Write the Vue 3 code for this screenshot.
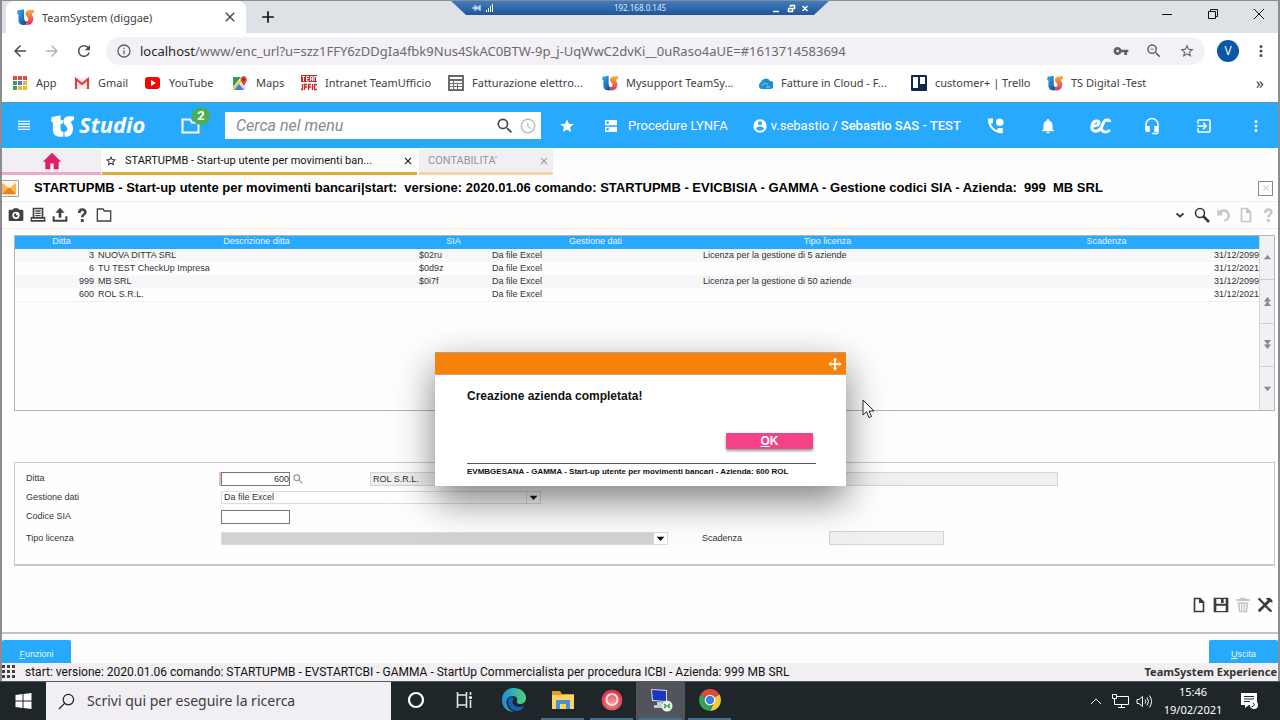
<script setup>
const p = {
  back: 'M20 11H7.83l5.59-5.59L12 4l-8 8 8 8 1.41-1.41L7.83 13H20z',
  forward: 'M12 4l-1.41 1.41L16.17 11H4v2h12.17l-5.58 5.59L12 20l8-8z',
  reload: 'M17.65 6.35A7.96 7.96 0 0 0 12 4a8 8 0 1 0 7.73 10h-2.08A6 6 0 1 1 12 6c1.66 0 3.14.69 4.22 1.78L13 11h7V4z',
  info: 'M11 17h2v-6h-2zm1-15a10 10 0 1 0 0 20 10 10 0 0 0 0-20zm0 18a8 8 0 1 1 0-16 8 8 0 0 1 0 16zM11 9h2V7h-2z',
  close: 'M19 6.41L17.59 5 12 10.59 6.41 5 5 6.41 10.59 12 5 17.59 6.41 19 12 13.41 17.59 19 19 17.59 13.41 12z',
  plus: 'M19 13h-6v6h-2v-6H5v-2h6V5h2v6h6z',
  key: 'M12.65 10A5.99 5.99 0 0 0 7 6a6 6 0 1 0 5.65 8H17v4h4v-4h2v-4zM7 14a2 2 0 1 1 0-4 2 2 0 0 1 0 4z',
  zoomOut: 'M15.5 14h-.79l-.28-.27A6.5 6.5 0 1 0 13.73 14.43l.27.28v.79l5 4.99L20.49 19zm-6 0a4.5 4.5 0 1 1 0-9 4.5 4.5 0 0 1 0 9zM7 9h5v1H7z',
  search: 'M15.5 14h-.79l-.28-.27A6.5 6.5 0 1 0 13.73 14.43l.27.28v.79l5 4.99L20.49 19zm-6 0a4.5 4.5 0 1 1 0-9 4.5 4.5 0 0 1 0 9z',
  starLine: 'M22 9.24l-7.19-.62L12 2 9.19 8.63 2 9.24l5.46 4.73L5.82 21 12 17.27 18.18 21l-1.63-7.03zM12 15.4l-3.76 2.27 1-4.28-3.32-2.88 4.38-.38L12 6.1l1.71 4.04 4.38.38-3.32 2.88 1 4.28z',
  star: 'M12 17.27L18.18 21l-1.64-7.03L22 9.24l-7.19-.61L12 2 9.19 8.63 2 9.24l5.46 4.73L5.82 21z',
  dots: 'M12 8a2 2 0 1 0 0-4 2 2 0 0 0 0 4zm0 2a2 2 0 1 0 0 4 2 2 0 0 0 0-4zm0 6a2 2 0 1 0 0 4 2 2 0 0 0 0-4z',
  menu: 'M3 18h18v-2H3zm0-4h18v-2H3zm0-4h18V8H3zm0-6v2h18V4z',
  clock: 'M12 2a10 10 0 1 0 0 20 10 10 0 0 0 0-20zm0 18a8 8 0 1 1 0-16 8 8 0 0 1 0 16zm.5-13H11v6l5.25 3.15.75-1.23-4.5-2.67z',
  dns: 'M20 13H4a1 1 0 0 0-1 1v6c0 .55.45 1 1 1h16a1 1 0 0 0 1-1v-6a1 1 0 0 0-1-1zM7 19a2 2 0 1 1 0-4 2 2 0 0 1 0 4zM20 3H4a1 1 0 0 0-1 1v6c0 .55.45 1 1 1h16a1 1 0 0 0 1-1V4a1 1 0 0 0-1-1zM7 9a2 2 0 1 1 0-4 2 2 0 0 1 0 4z',
  account: 'M12 2a10 10 0 1 0 0 20 10 10 0 0 0 0-20zm0 3a3 3 0 1 1 0 6 3 3 0 0 1 0-6zm0 14.2a7.2 7.2 0 0 1-6-3.22c.03-1.99 4-3.08 6-3.08s5.97 1.09 6 3.08a7.2 7.2 0 0 1-6 3.22z',
  phone: 'M1 2h7v6l-3 1c1.5 4 4.5 7 8 8.5l2-3h6v7C10 22.5 1 14 1 2zM17 2a5 5 0 1 0 0 10 5 5 0 0 0 0-10z',
  bell: 'M12 22a2 2 0 0 0 2-2h-4c0 1.1.9 2 2 2zm6-6v-5c0-3.07-1.64-5.64-4.5-6.32V4a1.5 1.5 0 0 0-3 0v.68C7.63 5.36 6 7.92 6 11v5l-2 2v1h16v-1z',
  headset: 'M12 1a9 9 0 0 0-9 9v7a3 3 0 0 0 3 3h3v-8H5v-2a7 7 0 0 1 14 0v2h-4v8h4v1h-7v2h6a3 3 0 0 0 3-3V10a9 9 0 0 0-9-9z',
  exit: 'M10.09 15.59L11.5 17l5-5-5-5-1.41 1.41L12.67 11H3v2h9.67zM19 3H5a2 2 0 0 0-2 2v4h2V5h14v14H5v-4H3v4c0 1.1.9 2 2 2h14a2 2 0 0 0 2-2V5a2 2 0 0 0-2-2z',
  home: 'M10 22v-7h4v7h6v-9h3L12 2 1 13h3v9z',
  camera: 'M9 2L7.2 4H3a2 2 0 0 0-2 2v13c0 1.1.9 2 2 2h18a2 2 0 0 0 2-2V6a2 2 0 0 0-2-2h-4.2L15 2zm3 5a5.500 5.500 0 1 1 0 11 5.500 5.500 0 0 1 0-11zM9 12.500a3 3 0 1 0 6 0h-3v-3a3 3 0 0 0-3 3z',
  printer: 'M4 1h16v14h3v7H1v-7h3zm2.500 2.500V15h11V3.500zM8 5h8v2H8zm0 3.500h8v2H8zM8 12h8v2H8zM3 17.500v2h18v-2z',
  upload: 'M12 1l7 7.5h-5V16h-4V8.5H5zM1 14h3v5h16v-5h3v8H1z',
  folderSquare: 'M1 2h10l2 3h10v17H1zm2 2v16h18V7h-9l-2-3z',
  help: 'M6 9c0-4 2-7 6.500-7S19 5 19 8c0 4-4.500 4-4.500 7.500h-4C10.500 11 15 10.500 15 8c0-1.500-1-2.500-2.500-2.500S10 7 10 9zM10.300 18h4.200v4.500h-4.200z',
  undo: 'M2 3l2.5 3C10 1 20 3 21 12c.4 5-3 9-8 10l-1-3c4-1 6-4 5-7.5-1-4-6-5-9-2.5l3 3-9 1z',
  doc: 'M4 1h10l6 6v16H4zm2.500 2.500v17h11V9H12V3.500z',
  save: 'M1 1h22v22H1zM5 3v7h14V3h-3v6h-4V3zM5 13v8h14v-8z',
  trash: 'M8 1h8v2h6v3H2V3h6zM4 8h16l-2 15H6zm3 2l1 11h1V10zm4 0v11h2V10zm4 0v11h1l1-11z',
  tools: 'M1 3l3-2 7.5 8L16 5l-3-3 6-1 4 4v4l-3-2-5.5 5.5L23 21l-3 2-8-8-8 8-3-3 8.500-8.500z'
}

const bookmarks = [
  { text: 'App', icon: 'apps' },
  { text: 'Gmail', icon: 'gmail' },
  { text: 'YouTube', icon: 'youtube' },
  { text: 'Maps', icon: 'maps' },
  { text: 'Intranet TeamUfficio', icon: 'team' },
  { text: 'Fatturazione elettro...', icon: 'sheet' },
  { text: 'Mysupport TeamSy...', icon: 'ts' },
  { text: 'Fatture in Cloud - F...', icon: 'cloud' },
  { text: 'customer+ | Trello', icon: 'trello' },
  { text: 'TS Digital -Test', icon: 'ts' }
]
const appColors = ['#e04a3f', '#e04a3f', '#e04a3f', '#3c9d5b', '#3f7fd0', '#f0b43c', '#3c9d5b', '#f0b43c', '#f0b43c']

const columns = ['Ditta', 'Descrizione ditta', 'SIA', 'Gestione dati', 'Tipo licenza', 'Scadenza']
const rows = [
  ['3', 'NUOVA DITTA SRL', '$02ru', 'Da file Excel', 'Licenza per la gestione di 5 aziende', '31/12/2099'],
  ['6', 'TU TEST CheckUp Impresa', '$0d9z', 'Da file Excel', '', '31/12/2021'],
  ['999', 'MB SRL', '$0i7f', 'Da file Excel', 'Licenza per la gestione di 50 aziende', '31/12/2099'],
  ['600', 'ROL S.R.L.', '', 'Da file Excel', '', '31/12/2021']
]
const scrollers = [
  { label: 'Riga precedente', d: 'M5 2l4 5H1z' },
  { label: 'Pagina precedente', d: 'M5 0l4 5H6v1l3 4H1l3-4V5H1z' },
  { label: 'Pagina successiva', d: 'M5 10L1 5h3V4L1 0h8L6 4v1h3z' },
  { label: 'Riga successiva', d: 'M5 8L1 3h8z' }
]
const headerTools = [
  { label: 'Chiamate', d: p.phone },
  { label: 'Notifiche', d: p.bell },
  { label: 'Euroconference', d: '' },
  { label: 'Assistenza', d: p.headset },
  { label: 'Esci', d: p.exit },
  { label: 'Altro', d: p.dots }
]
const leftTools = [
  { label: 'Cattura', d: p.camera },
  { label: 'Stampa', d: p.printer },
  { label: 'Esporta', d: p.upload },
  { label: 'Aiuto', d: p.help },
  { label: 'Cartella', d: p.folderSquare }
]
const actionTools = [
  { label: 'Nuovo', d: p.doc },
  { label: 'Salva', d: p.save },
  { label: 'Elimina', d: p.trash, off: true },
  { label: 'Strumenti', d: p.tools }
]
</script>

<template>
  <div class="desktop">
    <svg class="defs" aria-hidden="true">
      <defs>
        <linearGradient id="tsBlue" x1="0" y1="0" x2="1" y2="1">
          <stop offset="0" stop-color="#2fb7ee" /><stop offset="1" stop-color="#1d3f93" />
        </linearGradient>
        <linearGradient id="tsWarm" x1="0" y1="0" x2="0" y2="1">
          <stop offset="0" stop-color="#f9b233" /><stop offset="1" stop-color="#e32c66" />
        </linearGradient>
        <linearGradient id="edge" x1="0" y1="0" x2="1" y2="0">
          <stop offset="0" stop-color="#1b8fdc" /><stop offset="1" stop-color="#50d37c" />
        </linearGradient>
        <radialGradient id="redBall" cx=".5" cy=".6" r=".6">
          <stop offset="0" stop-color="#f9a3a8" /><stop offset="1" stop-color="#d3283a" />
        </radialGradient>
        <symbol id="tsLogo" viewBox="0 0 24 22">
          <path fill="url(#tsBlue)" d="M1 1c3 1 5-1 9-1v12c0 3 1 5 3 5v5C5 23 2 20 2 14V7L0 6z" />
          <path fill="url(#tsWarm)" d="M24 1C16 0 12 2 12 6c0 4 4 5 4 8 0 2-1 3-3 3v5c7 1 10-4 10-9 0-3-2-5-2-6s1-2 3-2z" />
        </symbol>
      </defs>
    </svg>

    <div class="session">
      <header class="tabstrip">
        <div class="browser-tab">
          <svg class="fav"><use href="#tsLogo" /></svg>
          <span>TeamSystem (diggae)</span>
          <button class="bare tab-x" aria-label="Chiudi scheda"><svg viewBox="0 0 24 24"><path :d="p.close" /></svg></button>
        </div>
        <button class="bare new-tab" aria-label="Nuova scheda"><svg viewBox="0 0 24 24"><path :d="p.plus" /></svg></button>
        <div class="window-buttons">
          <button class="bare" aria-label="Riduci"><svg viewBox="0 0 10 10"><path d="M0 5.500h10" /></svg></button>
          <button class="bare" aria-label="Ripristina"><svg viewBox="0 0 10 10"><path d="M.5 2.500h7v7h-7zM2.500 2.500v-2h7v7h-2" /></svg></button>
          <button class="bare" aria-label="Chiudi"><svg viewBox="0 0 10 10"><path d="M0 0l10 10M10 0L0 10" /></svg></button>
        </div>
        <div class="rdp">
          <svg class="rdp-left" viewBox="0 0 24 8">
            <path d="M1 4h3M4 1v6M5 3h3v2H5zM9 1v6" stroke="#fff" fill="none" />
            <path d="M15 8V6h1v2zM17 8V4h1v4zM19 8V2h1v6zM21 8V0h1v8z" fill="#fff" />
          </svg>
          <span>192.168.0.145</span>
          <svg class="rdp-right" viewBox="0 0 36 9">
            <path d="M0 7.500h6M15.500 4.500h4v3h-4zM17.500 3v-1.500h4v3h-1M29.500 2l5 5M34.500 2l-5 5" stroke="#fff" stroke-width="1.500" fill="none" />
          </svg>
        </div>
      </header>

      <div class="addressbar">
        <button class="bare nav" aria-label="Indietro"><svg viewBox="0 0 24 24"><path :d="p.back" /></svg></button>
        <button class="bare nav dim" aria-label="Avanti"><svg viewBox="0 0 24 24"><path :d="p.forward" /></svg></button>
        <button class="bare nav" aria-label="Ricarica"><svg viewBox="0 0 24 24"><path :d="p.reload" /></svg></button>
        <div class="omnibox">
          <svg class="i16" viewBox="0 0 24 24"><path :d="p.info" /></svg>
          <span class="url"><b>localhost</b>/www/enc_url?u=szz1FFY6zDDgIa4fbk9Nus4SkAC0BTW-9p_j-UqWwC2dvKi__0uRaso4aUE=#1613714583694</span>
          <button class="bare" aria-label="Password"><svg class="i16" viewBox="0 0 24 24"><path :d="p.key" /></svg></button>
          <button class="bare" aria-label="Zoom"><svg class="i18" viewBox="0 0 24 24"><path :d="p.zoomOut" /></svg></button>
          <button class="bare" aria-label="Preferiti"><svg class="i16" viewBox="0 0 24 24"><path :d="p.starLine" /></svg></button>
        </div>
        <button class="bare avatar" aria-label="Profilo">V</button>
        <button class="bare kebab" aria-label="Menu"><svg class="i18" viewBox="0 0 24 24"><path :d="p.dots" /></svg></button>
      </div>

      <nav class="bookmarks">
        <a v-for="b in bookmarks" :key="b.text" href="#">
          <svg v-if="b.icon === 'apps'" viewBox="0 0 16 16">
            <rect v-for="(c, i) in appColors" :key="i" :x="1 + (i % 3) * 5" :y="1 + Math.floor(i / 3) * 5" width="4" height="4" :fill="c" />
          </svg>
          <svg v-else-if="b.icon === 'gmail'" viewBox="0 0 16 16">
            <path fill="#f3ecec" d="M1 3h14v11H1z" /><path fill="none" stroke="#d8453b" stroke-width="2.200" d="M2 14V4l6 5 6-5v10" />
          </svg>
          <svg v-else-if="b.icon === 'youtube'" viewBox="0 0 16 16">
            <rect y="2" width="15" height="12" rx="3" fill="#f00707" /><path fill="#fff" d="M6 5l5 3-5 3z" />
          </svg>
          <svg v-else-if="b.icon === 'maps'" viewBox="0 0 16 16">
            <path fill="#2f9e5a" d="M1 2h8L1 12z" /><path fill="#f2c94c" d="M1 12l8-8 2 2-10 9z" />
            <path fill="#d8dde2" d="M7 9l4-1 3 6-3 1z" /><path fill="#3f7fd8" d="M2 15l5-6 5 6z" />
            <path fill="#e0443b" d="M11.500 1a3.500 3.500 0 0 1 3 5L12 11l-3-5a3.500 3.500 0 0 1 2.500-5z" /><circle cx="11.700" cy="4.500" r="1.200" fill="#8c1f1a" />
          </svg>
          <svg v-else-if="b.icon === 'team'" viewBox="0 0 16 16">
            <path fill="#d3222a" d="M0 0h16v7H0z" />
            <path stroke="#fff" fill="none" d="M1 1.500h3M2.500 1.500V6M8 1.500H5.500V6H8M5.500 3.500H8M9.500 6V1.500h2V6M9.500 4h2M13 6V1.500h2.500V6" />
            <path stroke="#d3222a" stroke-width="1.300" fill="none" d="M1.500 9v5.500H0M3.500 15V9.500H6M3.500 12H6M7.500 15V9.500H10M7.500 12H10M11.500 9v6M16 9.500h-2.500v5H16" />
          </svg>
          <svg v-else-if="b.icon === 'sheet'" viewBox="0 0 16 16">
            <path fill="#6b6b6b" d="M0 0h16v16H0z" /><path fill="#fff" d="M2 2h12v2H2zM2 6h3v2H2zM6 6h8v2H6zM2 9h3v2H2zM6 9h3v2H6zM10 9h4v2h-4zM2 12h3v2H2zM6 12h3v2H6zM10 12h4v2h-4z" />
          </svg>
          <svg v-else-if="b.icon === 'cloud'" viewBox="0 0 16 16">
            <path fill="#1990d4" d="M4 14a4 4 0 0 1 0-7 5 5 0 0 1 9-1 4 4 0 0 1 0 8z" /><path fill="none" stroke="#8fd3f6" d="M5 11c1-3 4-4 6-1M9 12h4" />
          </svg>
          <svg v-else-if="b.icon === 'trello'" viewBox="0 0 16 16">
            <rect width="16" height="16" rx="1" fill="#0b2a4c" /><path fill="#fff" d="M2 2h5v11H2zM9 2h5v7H9z" />
          </svg>
          <svg v-else><use href="#tsLogo" /></svg>
          {{ b.text }}
        </a>
        <button class="bare more" aria-label="Altri preferiti">»</button>
      </nav>

      <header class="appbar">
        <button class="bare" aria-label="Menu principale"><svg class="i16" viewBox="0 0 24 24"><path :d="p.menu" /></svg></button>
        <div class="brand">
          <svg viewBox="0 0 24 22">
            <path d="M1 1c3 1 5-1 9-1v5h3l-1 4h-2v4c0 3 1 4 3 4v5C5 23 2 20 2 14V7L0 6z" />
            <path d="M24 1C16 0 13 2 13 6c0 4 4 5 4 8 0 2-1 3-3 3v5c7 1 9-4 9-9 0-3-2-5-2-6s1-2 3-2z" />
          </svg>
          <span>Studio</span>
        </div>
        <button class="bare windows" aria-label="Finestre aperte">
          <svg class="i20" viewBox="0 0 20 20"><path d="M2.500 3.500H10l2 3h6.500v10h-16z" fill="none" stroke="#fff" stroke-width="2" /></svg>
          <span class="badge">2</span>
        </button>
        <div class="menu-search">
          <input type="text" placeholder="Cerca nel menu" aria-label="Cerca nel menu" />
          <button class="bare" aria-label="Cerca"><svg class="i20 dark" viewBox="0 0 24 24"><path :d="p.search" /></svg></button>
          <button class="bare" aria-label="Cronologia"><svg class="i18 pale" viewBox="0 0 24 24"><path :d="p.clock" /></svg></button>
        </div>
        <button class="bare fav-star" aria-label="Preferiti"><svg class="i16" viewBox="0 0 24 24"><path :d="p.star" /></svg></button>
        <a class="proc" href="#"><svg class="i16" viewBox="0 0 24 24"><path :d="p.dns" /></svg>Procedure LYNFA</a>
        <a class="user" href="#"><svg class="i16" viewBox="0 0 24 24"><path :d="p.account" /></svg><span>v.sebastio <b>/ Sebastio SAS - TEST</b></span></a>
        <div class="head-tools">
          <button v-for="t in headerTools" :key="t.label" class="bare" :aria-label="t.label">
            <svg v-if="t.d" class="i18" viewBox="0 0 24 24"><path :d="t.d" /></svg>
            <svg v-else class="ec" viewBox="0 0 22 16"><path d="M3 8c4 0 7-1 7-3.500S4 2 3 8s5 7 9 2c2-3 2-8 6-8 2 0 3 1 3 2M12 9c0 6 6 6 9 3" /></svg>
          </button>
        </div>
      </header>

      <nav class="app-tabs">
        <a href="#" class="tab-home" aria-label="Home"><svg viewBox="0 0 24 24"><path :d="p.home" /></svg></a>
        <div class="tab active">
          <svg class="i12" viewBox="0 0 24 24"><path :d="p.starLine" /></svg>
          <a href="#">STARTUPMB - Start-up utente per movimenti ban...</a>
          <button class="bare" aria-label="Chiudi STARTUPMB"><svg class="i12" viewBox="0 0 24 24"><path :d="p.close" /></svg></button>
        </div>
        <div class="tab idle">
          <a href="#">CONTABILITA'</a>
          <button class="bare" aria-label="Chiudi CONTABILITA'"><svg class="i12" viewBox="0 0 24 24"><path :d="p.close" /></svg></button>
        </div>
      </nav>

      <div class="titlebar">
        <svg class="env" viewBox="0 0 18 18">
          <path fill="#fff" stroke="#999" d="M0 .5h17.500v17H0" /><path fill="#f9b84a" d="M0 3h15v12H0z" /><path fill="#fff3dc" d="M0 3h15L7.500 9z" /><path fill="#e8821b" d="M0 15l7.500-7 7.500 7z" />
        </svg>
        <h1>STARTUPMB - Start-up utente per movimenti bancari|start:&nbsp; versione: 2020.01.06 comando: STARTUPMB - EVICBISIA - GAMMA - Gestione codici SIA - Azienda:&nbsp; 999&nbsp; MB SRL</h1>
        <button class="bare panel-x" aria-label="Chiudi pannello"><svg viewBox="0 0 24 24"><path :d="p.close" /></svg></button>
      </div>

      <div class="toolbar">
        <button v-for="t in leftTools" :key="t.label" class="bare" :aria-label="t.label"><svg class="i16" viewBox="0 0 24 24"><path :d="t.d" fill-rule="evenodd" /></svg></button>
        <div class="toolbar-right">
          <button class="bare" aria-label="Espandi"><svg class="i16" viewBox="0 0 16 16"><path d="M4.500 6.500L8 9.500l3.500-3" fill="none" stroke="#3c3c40" stroke-width="2" /></svg></button>
          <button class="bare" aria-label="Trova"><svg class="i16" viewBox="0 0 16 16"><circle cx="6" cy="6" r="4.500" fill="none" stroke="#3c3c40" stroke-width="1.600" /><path d="M9 9l6 6" stroke="#3c3c40" stroke-width="2.600" /></svg></button>
          <button class="bare off" aria-label="Annulla"><svg class="i16" viewBox="0 0 24 24"><path :d="p.undo" /></svg></button>
          <button class="bare off" aria-label="Documento"><svg class="i16" viewBox="0 0 24 24"><path :d="p.doc" fill-rule="evenodd" /></svg></button>
          <button class="bare off" aria-label="Guida"><svg class="i16" viewBox="0 0 24 24"><path :d="p.help" /></svg></button>
        </div>
      </div>

      <main class="work">
        <div class="list">
          <div class="list-body">
            <table>
              <colgroup><col class="c1" /><col class="c2" /><col class="c3" /><col class="c4" /><col class="c5" /><col /></colgroup>
              <thead><tr><th v-for="c in columns" :key="c" scope="col">{{ c }}</th></tr></thead>
              <tbody><tr v-for="r in rows" :key="r[0]"><td v-for="(v, i) in r" :key="i">{{ v }}</td></tr></tbody>
            </table>
          </div>
          <div class="scroller">
            <button v-for="s in scrollers" :key="s.label" class="bare" :aria-label="s.label"><svg viewBox="0 0 10 10"><path :d="s.d" /></svg></button>
          </div>
        </div>

        <form class="details" @submit.prevent>
          <div class="row">
            <label for="ditta">Ditta</label>
            <input id="ditta" class="short num required" type="text" value="600" />
            <button type="button" class="bare lookup" aria-label="Cerca ditta"><svg viewBox="0 0 16 16"><circle cx="6" cy="6" r="4.500" /><path d="M9 9l6 6" /></svg></button>
            <input class="name" type="text" value="ROL S.R.L." readonly aria-label="Ragione sociale" />
          </div>
          <div class="row">
            <label for="gestione">Gestione dati</label>
            <span class="pick w-medium">
              <select id="gestione"><option>Da file Excel</option></select>
              <svg viewBox="0 0 15 12"><path d="M3 4h9l-4.500 5z" /></svg>
            </span>
          </div>
          <div class="row">
            <label for="sia">Codice SIA</label>
            <input id="sia" class="short" type="text" />
          </div>
          <div class="row last">
            <label for="licenza">Tipo licenza</label>
            <span class="pick grey w-long">
              <select id="licenza"><option></option></select>
              <svg viewBox="0 0 15 12"><path d="M3 4h9l-4.500 5z" /></svg>
            </span>
            <label class="mid" for="scadenza">Scadenza</label>
            <input id="scadenza" class="date" type="text" readonly />
          </div>
        </form>

        <div class="actions">
          <button v-for="t in actionTools" :key="t.label" class="bare" :class="{ off: t.off }" :aria-label="t.label"><svg class="i16" viewBox="0 0 24 24"><path :d="t.d" fill-rule="evenodd" /></svg></button>
        </div>
      </main>

      <div class="commands">
        <button><u>F</u>unzioni</button>
        <button><u>U</u>scita</button>
      </div>

      <footer class="status">
        <svg viewBox="0 0 14 14"><path d="M0 0h3v3H0zM5 0h3v3H5zM10 0h3v3h-3zM0 5h3v3H0zM5 5h3v3H5zM10 5h3v3h-3zM0 10h3v3H0zM5 10h3v3H5zM10 10h3v3h-3z" /></svg>
        <span>start: versione: 2020.01.06 comando: STARTUPMB - EVSTARTCBI - GAMMA - StartUp Commercialista per procedura ICBI - Azienda: 999 MB SRL</span>
        <strong>TeamSystem Experience</strong>
      </footer>
    </div>

    <section class="dialog" role="dialog" aria-labelledby="msg">
      <div class="dialog-head">
        <svg viewBox="0 0 16 16"><path d="M8 1v14M1 8h14" stroke-width="2" /><path d="M5.500 4L8 1.300 10.500 4M5.500 12L8 14.700 10.500 12M4 5.500L1.300 8 4 10.500M12 5.500L14.700 8 12 10.500" /></svg>
      </div>
      <div class="dialog-body">
        <p id="msg">Creazione azienda completata!</p>
        <button><u>O</u>K</button>
        <footer>EVMBGESANA - GAMMA - Start-up utente per movimenti bancari - Azienda: 600 ROL</footer>
      </div>
    </section>

    <svg class="pointer" viewBox="0 0 13 20"><path d="M1 1v15l3.500-3.300L7 18.500l2.500-1L7 12h5z" fill="#fff" stroke="#222" /></svg>

    <footer class="taskbar">
      <button class="bare start" aria-label="Start"><svg viewBox="0 0 16 16"><path d="M0 2l7-1v6.500H0zM8 1l8-1v7.500H8zM0 8.500h7V15l-7-1zM8 8.500h8V16l-8-1z" /></svg></button>
      <label class="os-search">
        <svg viewBox="0 0 18 18"><circle cx="11" cy="7" r="5.500" /><path d="M7 11l-6 6" /></svg>
        <input type="text" placeholder="Scrivi qui per eseguire la ricerca" aria-label="Scrivi qui per eseguire la ricerca" />
      </label>
      <button class="bare task" aria-label="Cortana"><svg viewBox="0 0 24 24"><circle cx="12" cy="12" r="7" fill="none" stroke="#fff" stroke-width="2.200" /></svg></button>
      <button class="bare task" aria-label="Visualizzazione attività"><svg viewBox="0 0 24 24"><path d="M4.500 4v3h9V4M4.500 20v-3h9v3M4.500 7v10M13.500 7v10M17.500 4v3M17.500 12v8" fill="none" stroke="#e4e4e4" stroke-width="1.600" /><circle cx="17.500" cy="9.500" r="1.600" fill="#fff" /></svg></button>
      <button class="bare task" aria-label="Edge"><svg viewBox="0 0 24 24"><path fill="url(#edge)" d="M0 12C0 4 6 0 12 0s12 4 12 10c0 4-3 6-6 6-2 0-4-1-3-3 1-3-1-5-4-5-5 0-8 4-6 9 1 4 4 6 7 7C5 24 0 19 0 12z" /><path fill="#1161b5" d="M9 9c-5 2-4 13 6 14 3 0 6-2 7-5-4 2-9 1-11-2-1-3 0-5 1-6z" /></svg></button>
      <button class="bare task run" aria-label="Esplora file"><svg viewBox="0 0 24 24"><path fill="#e0a020" d="M1 3h8l2 3h12v6H1z" /><path fill="#fcd462" d="M1 7h22v14H1z" /><path fill="#4a92cf" d="M5 12h14v9h-4v-5H9v5H5z" /></svg></button>
      <button class="bare task run" aria-label="Registratore"><svg viewBox="0 0 24 24"><circle cx="12" cy="12" r="10.500" fill="url(#redBall)" /><circle cx="12" cy="11.500" r="5.500" fill="none" stroke="#ffe0e0" stroke-width="2" /></svg></button>
      <button class="bare task run on" aria-label="Desktop remoto"><svg viewBox="0 0 24 24"><path fill="#d6dbe4" d="M2 1l16 1v12L3 13z" /><path fill="#1b35c4" d="M3 2l14 1v10L4 12z" /><path fill="#c5cad2" d="M8 14h5v3h3v3H5v-3h3z" /><circle cx="18" cy="18" r="5.500" fill="#e9f2e6" /><path d="M15 16l2 2-2 2M21 16l-2 2 2 2" fill="none" stroke="#2c9b3b" stroke-width="1.500" /></svg></button>
      <button class="bare task run" aria-label="Chrome"><svg viewBox="0 0 24 24"><path fill="#e0483c" d="M12 12L2.500 6.500a11 11 0 0 1 19 0z" /><path fill="#f7ca3e" d="M12 12l9.500-5.500A11 11 0 0 1 12 23l3-6z" /><path fill="#35a057" d="M12 12l2.500 5.500L12 23A11 11 0 0 1 2.500 6.500z" /><circle cx="12" cy="12" r="5.300" fill="#fff" /><circle cx="12" cy="12" r="4.200" fill="#3f7ee8" /></svg></button>
      <div class="tray">
        <button class="bare" aria-label="Icone nascoste"><svg class="caret" viewBox="0 0 12 8"><path d="M1 7l5-5 5 5" /></svg></button>
        <button class="bare" aria-label="Rete"><svg viewBox="0 0 17 15"><path d="M4.500 2.500h12v8H4.500M9.500 10.500v3M6 13.500h7M.5.500h4v4h-4zM2.500 4.500v6h3" /></svg></button>
        <button class="bare" aria-label="Volume"><svg viewBox="0 0 17 15"><path d="M1 5.500h2l3.500-3v10l-3.500-3H1zM9 5.500q1.500 2 0 4M11 3.500q3 4 0 8M13.500 1.500q4 6 0 12" /></svg></button>
        <div class="clock"><time>15:46</time><span>19/02/2021</span></div>
        <button class="bare" aria-label="Notifiche"><svg class="note" viewBox="0 0 18 18"><path class="solid" d="M1 1h16v12H9l-4 3v-3H1z" /><path class="lines" d="M4 4.500h10M4 7h10M4 9.500h6" /><circle class="solid" cx="14" cy="13" r="4" /><path class="lines" d="M13 10.500q3 3-1.500 4.500" /></svg></button>
      </div>
    </footer>
  </div>
</template>

<style>
html, body { background: #fff; }
</style>

<style scoped>
* { box-sizing: border-box; }
.desktop { position: relative; min-height: 100vh; display: flex; flex-direction: column; background: #fefefe; color: #111; font-family: "Liberation Sans", Arial, sans-serif; overflow: hidden; }
.defs { position: absolute; width: 0; height: 0; }
a { color: inherit; text-decoration: none; }
svg { display: block; flex: none; fill: currentColor; }
input, select, button { font: inherit; color: inherit; border-radius: 0; margin: 0; }
.bare { border: 0; padding: 0; background: none; display: flex; align-items: center; justify-content: center; flex: none; }
.i12 { width: 12px; height: 12px; }
.i16 { width: 16px; height: 16px; }
.i18 { width: 18px; height: 18px; }
.i20 { width: 20px; height: 20px; }
.session { flex: 1; display: flex; flex-direction: column; border: solid #8c8c92; border-width: 1px 2px 0; }

.tabstrip { position: relative; display: flex; align-items: stretch; height: 32px; background: #dee1e6; font-family: "Noto Sans", "Open Sans", sans-serif; }
.browser-tab { display: flex; align-items: center; width: 240px; margin-left: 4px; padding: 0 8px 0 11px; background: #fff; border-radius: 8px 8px 0 0; font-size: 11px; color: #3f4246; }
.fav { width: 17px; height: 16px; margin-right: 8px; }
.tab-x { margin-left: auto; }
.tab-x svg { width: 16px; height: 16px; }
.new-tab { width: 40px; margin-left: 2px; }
.new-tab svg { width: 20px; height: 20px; }
.window-buttons { display: flex; gap: 8px; margin-left: auto; }
.window-buttons button { width: 38px; padding-bottom: 7px; }
.window-buttons svg { width: 10px; height: 10px; fill: none; stroke: #111; }
.rdp { position: absolute; top: 0; left: 0; right: 0; width: 378px; height: 14px; margin: 0 auto; padding: 0 40px 0 20px; display: flex; align-items: center; justify-content: space-between; background: linear-gradient(#3f7cbd, #20559a); clip-path: polygon(0 0, 100% 0, 96% 100%, 4% 100%); color: #dfeaf6; font-size: 8px; line-height: 12px; }
.rdp-left { width: 24px; height: 8px; }
.rdp-right { width: 36px; height: 9px; margin-right: -20px; }
.rdp span { padding-left: 12px; }

.addressbar { display: flex; align-items: center; height: 36px; padding: 0 8px 0 2px; color: #4a4b50; background: #fff; }
.nav { width: 32px; }
.nav svg { width: 18px; height: 18px; }
.dim { color: #b4b4b8; }
.omnibox { flex: 1; display: flex; align-items: center; gap: 16px; height: 28px; margin-left: 6px; padding: 0 10px; border-radius: 14px; background: #f3f1f5; color: #5f6066; }
.omnibox .url { flex: 1; min-width: 0; margin-left: -8px; white-space: nowrap; font: 13px/20px "Noto Sans", "Open Sans", sans-serif; color: #6a6a70; }
.url b { font-weight: 400; color: #26262a; }
.avatar { width: 22px; height: 22px; margin-left: 12px; border-radius: 50%; background: #0b57a4; color: #fff; font: 12px/22px "Open Sans", sans-serif; }
.kebab { margin-left: 13px; }

.bookmarks { display: grid; grid-template-columns: 62px 71px 87px 69px 147px 154px 155px 154px 136px 1fr auto; align-items: center; height: 33px; padding: 0 14px 5px 10px; background: #fff; font: 11px/16px "Noto Sans", "Open Sans", sans-serif; color: #404045; }
.bookmarks a { display: flex; align-items: center; gap: 8px; white-space: nowrap; }
.bookmarks svg { width: 16px; height: 16px; }
.more { font-size: 16px; }

.appbar { display: flex; align-items: center; height: 46px; padding: 0 10px 0 14px; border-top: 1px solid #5393bd; background: #27a9fd; color: #fff; font-family: Roboto, sans-serif; }
.brand { display: flex; align-items: center; gap: 5px; margin-left: 19px; font: italic 700 22px/28px "Open Sans", "Noto Sans", sans-serif; }
.brand svg { width: 23px; height: 22px; }
.brand span { width: 68px; margin-top: -4px; }
.windows { position: relative; margin-left: 33px; }
.badge { position: absolute; left: 12px; top: -9px; width: 18px; height: 18px; border-radius: 50%; background: #4caf50; font: 700 13px/18px Roboto, sans-serif; text-align: center; }
.menu-search { display: flex; align-items: center; gap: 4px; width: 316px; height: 27px; margin-left: 25px; padding: 0 4px 0 11px; background: #fff; }
.menu-search input { flex: 1; min-width: 0; border: 0; padding: 0; outline: 0; background: none; font: italic 16px/20px Roboto, sans-serif; color: #777; }
.menu-search input::placeholder { color: #8a8a8e; opacity: 1; }
.dark { color: #4a4a4e; }
.pale { color: #bdbdc4; }
.fav-star { margin-left: 18px; }
.proc, .user { display: flex; align-items: center; white-space: nowrap; font-size: 13px; line-height: 20px; }
.proc { gap: 9px; margin-left: 28px; }
.user { gap: 3px; margin-left: 24px; }
.user b { font-weight: 500; }
.head-tools { display: flex; gap: 28px; margin-left: auto; }
.head-tools button { width: 24px; }
.ec { width: 22px; height: 16px; fill: none; stroke: #fff; stroke-width: 3; }

.app-tabs { display: flex; height: 27px; gap: 1px; padding-top: 1px; font: 11px/16px Roboto, sans-serif; }
.tab-home { display: flex; align-items: center; justify-content: center; width: 99px; background: #f1eff2; border-bottom: 3px solid #eda9c6; color: #df1f68; }
.tab-home svg { width: 20px; height: 20px; }
.tab { display: flex; align-items: center; padding: 0 3px; border-bottom: 3px solid #e7aa35; }
.tab button { margin-left: auto; }
.tab a { white-space: nowrap; }
.active { width: 315px; gap: 8px; color: #111; }
.idle { width: 134px; margin-left: 1px; padding-left: 9px; background: #f1eff2; border-color: #f3d6a5; color: #94949a; }

.titlebar { display: flex; align-items: center; height: 27px; padding: 0 5px 0 0; border-bottom: 1px solid #efedf0; }
.env { width: 17px; height: 17px; }
h1 { flex: 1; min-width: 0; margin: 0 0 0 15px; font-size: 13px; line-height: 18px; font-weight: 700; color: #000; white-space: nowrap; }
.panel-x { width: 15px; height: 15px; border: 1px solid #88888c; color: #c9c9cc; }
.panel-x svg { width: 10px; height: 10px; }

.toolbar { display: flex; align-items: center; gap: 6px; height: 27px; padding: 0 2px 0 6px; border-bottom: 1px solid #efedf0; color: #414145; }
.toolbar-right { display: flex; gap: 6px; margin-left: auto; }
.off { color: #c6c6ca; }

.work { flex: 1; display: flex; flex-direction: column; padding: 6px 3px 0 12px; font-size: 9px; line-height: 13px; border-bottom: 2px solid #c3c3c5; }
.list { display: flex; min-height: 176px; border: 1px solid #b4b4b6; }
.list-body { flex: 1; min-width: 0; }
table { width: 100%; table-layout: fixed; border-collapse: collapse; color: #333; }
.c1 { width: 81px; } .c2 { width: 321px; } .c3 { width: 73px; } .c4 { width: 211px; } .c5 { width: 253px; }
th, td { padding: 0 2px; height: 13px; font-weight: 400; text-align: left; white-space: nowrap; }
thead tr { background: #27a9fd; color: #e8f6ff; }
th { padding: 0 0 2px; text-align: center; line-height: 11px; }
th:first-child { padding-left: 12px; }
td:first-child, td:last-child { text-align: right; }
td:last-child { padding-right: 0; }
tbody tr:nth-child(odd) { background: #f7f6f9; }
tbody tr:last-child { border-bottom: 1px solid #f1f0f2; }
.scroller { display: flex; flex-direction: column; width: 15px; border-left: 1px solid #d6d6d8; background: #f1f0f3; color: #8b8b8f; }
.scroller button { flex: 1; }
.scroller button + button { border-top: 1px solid #d0d0d3; }
.scroller svg { width: 9px; height: 9px; }

.details { display: flex; flex-direction: column; gap: 6px; margin-top: 51px; padding: 9px 11px 19px; border: 1px solid #c9c9cb; border-bottom-width: 2px; color: #333; }
.row { display: flex; align-items: center; height: 13px; }
.row.last { height: 14px; margin-top: 2px; }
.row label { flex: none; width: 195px; }
.row input { height: 14px; padding: 0 2px; border: 1px solid #d4d3d6; background: #f1eff2; outline: 0; }
.row input.short { width: 69px; border-color: #77777a; background: #fff; }
.row input.num { text-align: right; padding-right: 0; }
.row input.required { box-shadow: -2px 0 #e5bcc8; }
.lookup { margin-left: 3px; }
.lookup svg { width: 10px; height: 10px; fill: none; stroke: #9b9b9f; stroke-width: 2; }
.row input.name { width: 688px; margin-left: 67px; }
.row input.date { width: 115px; }
.row label.mid { width: 127px; margin-left: 34px; }
.pick { position: relative; display: flex; height: 13px; }
.pick select { appearance: none; width: 100%; padding: 0 16px 0 2px; border: 1px solid #dcdbde; background: transparent; outline: 0; line-height: 11px; }
.pick svg { position: absolute; right: 0; top: 0; width: 15px; height: 100%; border: 1px solid #dcdbde; color: #111; pointer-events: none; }
.grey select { background: #d2d1d3; }
.grey svg { background: #fff; }
.w-medium { width: 320px; }
.w-long { width: 447px; }

.actions { display: flex; justify-content: flex-end; gap: 6px; margin-top: auto; padding: 0 2px 19px 0; color: #3c3c40; }
.actions .off { color: #c6c6ca; }

.commands { display: flex; justify-content: space-between; padding-top: 6px; }
.commands button { width: 69px; height: 23px; padding: 5px 0 0; border: 0; border-radius: 2px 2px 0 0; background: #27a9fd; color: #e8f6ff; font-size: 9px; line-height: 14px; }
.status { display: flex; align-items: center; height: 18px; padding: 0 1px 0 0; background: #f1eff2; font: 500 12px/18px Roboto, sans-serif; color: #111; }
.status svg { width: 14px; height: 14px; color: #414145; }
.status span { margin-left: 9px; font-weight: 400; white-space: nowrap; }
.status strong { margin-left: auto; font: 700 11px/18px "Noto Sans", sans-serif; color: #333; white-space: nowrap; }

.dialog { position: absolute; top: 352px; left: 1px; right: 0; width: 411px; margin: 0 auto; background: #fff; border-top: 1px solid #b0a090; box-shadow: 0 14px 36px rgba(0, 0, 0, .5); }
.dialog-head { display: flex; align-items: center; justify-content: flex-end; height: 22px; padding-right: 4px; background: #f7820a; border-bottom: 1px solid #cfa27a; }
.dialog-head svg { width: 14px; height: 14px; fill: none; stroke: #fff; }
.dialog-body { display: flex; flex-direction: column; padding: 12px 30px 8px 32px; }
.dialog p { margin: 0; font-size: 12px; line-height: 18px; font-weight: 700; }
.dialog button { align-self: flex-end; width: 87px; height: 16px; margin: 28px 3px 0 0; padding: 0; border: 0; border-radius: 1px; background: #f44286; box-shadow: 0 2px 3px rgba(0, 0, 0, .4); color: #fff; font-size: 12px; line-height: 16px; font-weight: 700; }
.dialog footer { margin-top: 14px; padding-top: 1px; border-top: 1px solid #555; font-size: 8px; line-height: 13px; font-weight: 700; white-space: nowrap; }
.pointer { position: absolute; left: 862px; top: 399px; width: 13px; height: 20px; }

.taskbar { display: flex; height: 39px; background: #1f2629; color: #fff; font-family: "Noto Sans", "Open Sans", sans-serif; border-top: 1px solid #55585b; }
.start { width: 46px; }
.start svg { width: 17px; height: 16px; }
.os-search { display: flex; align-items: center; width: 345px; padding: 0 12px; gap: 12px; background: #f1eff3; color: #222; }
.os-search svg { width: 17px; height: 17px; fill: none; stroke: #222; stroke-width: 1.300; }
.os-search input { flex: 1; min-width: 0; padding: 0; border: 0; outline: 0; background: none; font-size: 14px; line-height: 20px; }
.os-search input::placeholder { color: #3c3c40; opacity: 1; }
.task { width: 49px; border-bottom: 2px solid transparent; }
.task svg { width: 24px; height: 24px; }
.run { border-image: linear-gradient(90deg, transparent 10%, #48718f 10%, #48718f 90%, transparent 90%) 2; }
.on { background: #51555b; }
.tray { display: flex; align-items: center; gap: 7px; margin-left: auto; padding-right: 22px; }
.tray svg { width: 17px; height: 15px; fill: none; stroke: #fff; }
.tray .caret { width: 12px; height: 8px; margin-right: 3px; }
.clock { display: flex; flex-direction: column; align-items: center; width: 66px; margin: 0 7px 0 0; font-size: 11px; line-height: 18px; }
.tray .note { width: 18px; height: 18px; }
.note .solid { fill: #fff; stroke: none; }
.note .lines { stroke: #1f2629; fill: none; }
</style>
